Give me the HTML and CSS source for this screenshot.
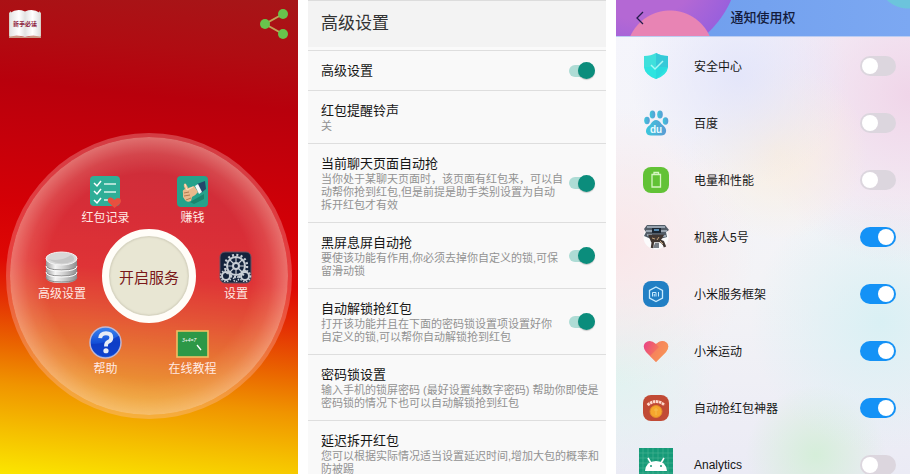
FILE: index.html
```
<!DOCTYPE html>
<html lang="zh-CN">
<head>
<meta charset="utf-8">
<title>抢红包助手</title>
<link rel="stylesheet" href="styles.css">
</head>
<body>
<main class="screens">

<section class="screen home">
  <header class="home-bar">
    <button class="plain" aria-label="新手必读">
      <svg width="34" height="30" viewBox="0 0 34 30">
        <defs><linearGradient id="page" x1="0" x2="1" y1="0" y2="0"><stop offset="0" stop-color="#e4e4e4"/><stop offset=".3" stop-color="#fff"/><stop offset=".5" stop-color="#e2e2e2"/><stop offset=".75" stop-color="#fff"/><stop offset="1" stop-color="#e0e0e0"/></linearGradient></defs>
        <path d="M1 4 3 2v26H1zM31 2l2 2v24h-2z" fill="#d9d0c8"/>
        <path d="M1 27Q9 26 17 28Q25 26 33 27V29H1Z" fill="#c99a86"/>
        <path d="M2 4Q9-1 17 2.500Q25-1 32 4V27.500Q24 26 17 28Q10 26 2 27.500Z" fill="url(#page)"/>
        <text x="17" y="17" class="book-text">新手必读</text>
      </svg>
    </button>
    <button class="plain" aria-label="分享">
      <svg width="28" height="32" viewBox="0 0 28 32">
        <path d="M23 6 5 16l18 10" fill="none" stroke="#c0a458" stroke-width="2"/>
        <g fill="#68c34c"><circle cx="23" cy="6" r="5"/><circle cx="5" cy="16" r="5"/><circle cx="23" cy="26" r="5"/></g>
      </svg>
    </button>
  </header>
  <nav class="wheel">
    <div class="wheel-row spread">
      <button class="tile">
        <svg width="33" height="33" viewBox="0 0 33 33">
          <rect x="1" y="1" width="30" height="30" rx="4" fill="#2fae97"/>
          <path d="m5 8 3 3 4-5M5 16l3 3 4-5M5 25l3 3 4-5" fill="none" stroke="#fff" stroke-width="1.500"/>
          <path d="M15 9h12M15 17h12M15 25h4" stroke="#d7f2ea" stroke-width="1.500"/>
          <path d="M25.500 33 19 27Q18 22 22 22.500Q24 23 25.500 25Q28 22 31 23.500Q33 26 31 28.500Z" fill="#e8503f"/>
        </svg>
        <span>红包记录</span>
      </button>
      <button class="tile">
        <svg width="33" height="33" viewBox="0 0 33 33">
          <rect x="1" y="1" width="31" height="31" rx="4" fill="#25a28b"/>
          <path d="M14 27 28 19V24L18 29Z" fill="#167863" opacity=".7"/>
          <path d="m21 9 8-3 1 8-5 4z" fill="#24476b"/>
          <path d="m19 11 3-2 4 8-3 2z" fill="#f4f8fa"/>
          <path d="M8 9Q10 7 12 13L18 11 22 17Q20 20 16 22L15 26Q11 28 9 25L7 22 7 18Q6 15 9 14Q7 11 8 9Z" fill="#eab98c"/>
          <path d="m8 18 5-1M8 21l6-1M10 25l5-2" stroke="#b37b50" stroke-width="1"/>
          <path d="m9 9 2 6 6-3" stroke="#ffe0bc" fill="none"/>
        </svg>
        <span>赚钱</span>
      </button>
    </div>
    <div class="wheel-row">
      <button class="tile">
        <svg width="33" height="33" viewBox="0 0 33 33">
          <defs><linearGradient id="metal"><stop offset="0" stop-color="#9b9b9b"/><stop offset=".3" stop-color="#f5f5f5"/><stop offset=".6" stop-color="#cdcdcd"/><stop offset="1" stop-color="#8d8d8d"/></linearGradient></defs>
          <path d="M1 7v19q0 6 15.500 6T32 26V7z" fill="url(#metal)"/>
          <path d="M1 14q0 5 15.500 5T32 14M1 20q0 5 15.500 5T32 20M1 26q0 5 15.500 5T32 26" fill="none" stroke="#888" stroke-width="1"/>
          <path d="M1 15q0 5 15.500 5T32 15M1 21q0 5 15.500 5T32 21" fill="none" stroke="#fff" stroke-width="1"/>
          <ellipse cx="16.500" cy="7.500" rx="15.500" ry="6.500" fill="#d8d8d8" stroke="#f4f4f4"/>
          <path d="M3 8q13 3 23-4 5 3 2 6-12 6-25-2z" fill="#c6c6c6"/>
        </svg>
        <span>高级设置</span>
      </button>
      <button class="start">开启服务</button>
      <button class="tile">
        <svg width="33" height="33" viewBox="0 0 33 33">
          <rect x="1" y="1" width="31" height="31" rx="5" fill="#14233c" stroke="#6d5362"/>
          <g fill="none" stroke="#c9cfd6">
            <circle cx="17" cy="15" r="9" stroke-width="2"/>
            <circle cx="17" cy="15" r="11" stroke-width="2.500" stroke-dasharray="2 2.320"/>
            <circle cx="17" cy="15" r="3" stroke-width="2"/>
            <path d="M17 6v6M17 18v6M8 15h6M20 15h6M11 9l4 4M23 9l-4 4M11 21l4-4M23 21l-4-4" stroke-width="1.200"/>
            <circle cx="7" cy="25" r="4" stroke-width="2"/><circle cx="7" cy="25" r="5.500" stroke-width="1.500" stroke-dasharray="1.500 1.500"/>
            <circle cx="26" cy="25" r="4" stroke-width="2"/><circle cx="26" cy="25" r="5.500" stroke-width="1.500" stroke-dasharray="1.500 1.500"/>
            <circle cx="17" cy="28" r="2.500" stroke-width="1.500" stroke-dasharray="1.500 1"/>
          </g>
        </svg>
        <span>设置</span>
      </button>
    </div>
    <div class="wheel-row spread">
      <button class="tile">
        <svg width="33" height="33" viewBox="0 0 34 34">
          <defs><linearGradient id="help" x1="0" y1="0" x2="0" y2="1"><stop offset="0" stop-color="#3c86f0"/><stop offset=".5" stop-color="#1450d8"/><stop offset="1" stop-color="#1c62ea"/></linearGradient></defs>
          <circle cx="17" cy="17" r="16" fill="url(#help)" stroke="#c3b6cf" stroke-width="1.500"/>
          <path d="M2 18Q14 20 31 10Q34 20 28 27Q17 36 6 27Q2 23 2 18Z" fill="#0b32bd" opacity=".65"/>
          <path d="M11.500 12.500Q12 7.500 17.500 7.500Q23 7.500 23 12Q23 15 19.500 16.500Q17.500 17.500 17.500 21" fill="none" stroke="#e8edf6" stroke-width="4"/>
          <circle cx="17.500" cy="25.500" r="2.700" fill="#e8edf6"/>
        </svg>
        <span>帮助</span>
      </button>
      <button class="tile">
        <svg width="33" height="33" viewBox="0 0 33 33">
          <rect x="1" y="5" width="31" height="26" fill="#2d9847" stroke="#f1bf63" stroke-width="1.600"/>
          <text x="6" y="16" class="board-text">3+4=7</text>
          <path d="m21 19 4 5" stroke="#fff" stroke-width="1.300"/>
        </svg>
        <span>在线教程</span>
      </button>
    </div>
  </nav>
</section>

<section class="screen prefs">
  <h1 class="prefs-title">高级设置</h1>
  <ul class="prefs-list">
    <li class="pref"><div class="pref-text"><label class="pref-name" for="p1">高级设置</label></div><input class="md-switch" type="checkbox" id="p1" checked></li>
    <li class="pref"><div class="pref-text"><h2 class="pref-name">红包提醒铃声</h2><p>关</p></div></li>
    <li class="pref"><div class="pref-text"><label class="pref-name" for="p2">当前聊天页面自动抢</label><p>当你处于某聊天页面时，该页面有红包来，可以自<br>动帮你抢到红包,但是前提是助手类别设置为自动<br>拆开红包才有效</p></div><input class="md-switch" type="checkbox" id="p2" checked></li>
    <li class="pref"><div class="pref-text"><label class="pref-name" for="p3">黑屏息屏自动抢</label><p>要使该功能有作用,你必须去掉你自定义的锁,可保<br>留滑动锁</p></div><input class="md-switch" type="checkbox" id="p3" checked></li>
    <li class="pref"><div class="pref-text"><label class="pref-name" for="p4">自动解锁抢红包</label><p>打开该功能并且在下面的密码锁设置项设置好你<br>自定义的锁,可以帮你自动解锁抢到红包</p></div><input class="md-switch" type="checkbox" id="p4" checked></li>
    <li class="pref"><div class="pref-text"><h2 class="pref-name">密码锁设置</h2><p>输入手机的锁屏密码 (最好设置纯数字密码) 帮助你即使是<br>密码锁的情况下也可以自动解锁抢到红包</p></div></li>
    <li class="pref"><div class="pref-text"><h2 class="pref-name">延迟拆开红包</h2><p>您可以根据实际情况适当设置延迟时间,增加大包的概率和<br>防被踢</p></div></li>
  </ul>
</section>

<section class="screen access">
  <header class="access-bar">
    <button class="plain back" aria-label="返回"><svg width="10" height="14" viewBox="0 0 10 14"><path d="M8 1 2 7l6 6" fill="none" stroke="#241c4c" stroke-width="1.300"/></svg></button>
    <h1>通知使用权</h1>
  </header>
  <ul class="app-list">
    <li class="app">
      <svg class="app-icon" viewBox="0 0 26 26"><path d="M13 0Q18 3 25 3V14Q24 22 13 26Q2 22 1 14V3Q8 3 13 0Z" fill="#3fe0dc"/><path d="M13 0Q18 3 25 3V14L13 26Z" fill="#35c9d8"/><path d="M1 14h24Q24 22 13 26Q2 22 1 14Z" fill="#22e6e2" opacity=".6"/><path d="m8 12 4 4 8-8" fill="none" stroke="#a8f8f4" stroke-width="1.500"/></svg>
      <label for="a1">安全中心</label><input class="mi-switch" type="checkbox" id="a1">
    </li>
    <li class="app">
      <svg class="app-icon" viewBox="0 0 26 26"><defs><linearGradient id="paw"><stop offset="0" stop-color="#3cc8dc"/><stop offset="1" stop-color="#5b9bd4"/></linearGradient></defs><g fill="url(#paw)"><ellipse cx="4" cy="10.500" rx="2.800" ry="3.700"/><ellipse cx="9.500" cy="4.500" rx="2.800" ry="4"/><ellipse cx="17" cy="4.500" rx="2.800" ry="4"/><ellipse cx="22.500" cy="11" rx="2.800" ry="3.700"/><path d="M13 10Q16 10 18.500 14Q24 18 23 22Q22 26 17 25.500H9Q4 26 3 22Q2.500 18 7 15Q10 10 13 10Z"/></g><text x="13" y="23" class="du-text">du</text></svg>
      <label for="a2">百度</label><input class="mi-switch" type="checkbox" id="a2">
    </li>
    <li class="app">
      <svg class="app-icon" viewBox="0 0 26 26"><rect width="26" height="26" rx="8" fill="#62c236"/><path d="M9 7.500h8.500V20H9zM11 7V5.500h4.500V7" fill="none" stroke="#d6f5c2" stroke-width="1.300"/></svg>
      <label for="a3">电量和性能</label><input class="mi-switch" type="checkbox" id="a3">
    </li>
    <li class="app">
      <svg class="app-icon" viewBox="0 0 26 26"><circle cx="13" cy="13" r="12.500" fill="#fbfbfc"/><path d="M1 5 4 1h18l4 5-3 2 1 5-7 2H8L1 12l2-4z" fill="#535d68"/><path d="M4 3h18M3 7h6M18 7h6M4 11h5M18 12h5" stroke="#aebbc6" stroke-width="1.300"/><rect x="9" y="4" width="9" height="5" fill="#1c2733"/><path d="M11 6h5" stroke="#68aada" stroke-width="1.500"/><path d="M7 12h12l-3 5H9zM10 17l-1 7M15 16l5 2 2 5" fill="#493d37" stroke="#413732" stroke-width="2.500"/><path d="M10 24h6v-5h-4z" fill="#777e86"/><path d="m9 14 3 1M16 13l-2 3M17 17l3 3" stroke="#c1a178"/></svg>
      <label for="a4">机器人5号</label><input class="mi-switch" type="checkbox" id="a4" checked>
    </li>
    <li class="app">
      <svg class="app-icon" viewBox="0 0 26 26"><rect width="26" height="26" rx="8" fill="#217fc4"/><path d="m13 6 6.500 3.500v7.500L13 20.500 6.500 17V9.500z" fill="none" stroke="#c9ecff" stroke-width="1.300"/><path d="M9.500 15.500v-4h3.500v4M11.250 13v2.500M15.500 11v4.500" fill="none" stroke="#c9ecff"/></svg>
      <label for="a5">小米服务框架</label><input class="mi-switch" type="checkbox" id="a5" checked>
    </li>
    <li class="app">
      <svg class="app-icon" viewBox="0 0 26 26"><defs><linearGradient id="heart" x1="0" x2="1" y1="0" y2=".4"><stop offset="0" stop-color="#e8408a"/><stop offset=".5" stop-color="#f26a64"/><stop offset="1" stop-color="#f79454"/></linearGradient></defs><path d="M13 24 3 14Q-1 9 2 5Q7 .500 13 6Q19 .500 24 5Q27 9 23 14Z" fill="url(#heart)"/><path d="M13 6Q19 .500 24 5Q27 9 23 14L13 24 7 18 16 9Z" fill="#f99258" opacity=".6"/></svg>
      <label for="a6">小米运动</label><input class="mi-switch" type="checkbox" id="a6" checked>
    </li>
    <li class="app">
      <svg class="app-icon" viewBox="0 0 26 26"><rect width="26" height="26" rx="8" fill="#c14a35"/><path d="M4.500 10Q13 3 21.500 10" fill="none" stroke="#ffd9cc" stroke-width="2.800" stroke-dasharray="2.500 .6"/><circle cx="13" cy="16.500" r="6" fill="#f6a72d" stroke="#e38b2a"/><path d="M13 13v7M11 15h4" stroke="#f8bd4c"/></svg>
      <label for="a7">自动抢红包神器</label><input class="mi-switch" type="checkbox" id="a7" checked>
    </li>
    <li class="app">
      <svg class="app-icon large" viewBox="0 0 34 34"><rect width="34" height="34" fill="#169a78"/><path d="M4 0v34M9 0v34M14 0v34M19 0v34M24 0v34M29 0v34M0 5h34M0 10h34M0 15h34M0 20h34M0 25h34M0 30h34" stroke="#4ab796" stroke-width=".6"/><path d="m9 10 3 5M25 10l-3 5" stroke="#fff" stroke-width="1.500"/><path d="M6 23Q7 13 17 13T28 23Z" fill="#fff"/><circle cx="12" cy="18" r="1" fill="#169a78"/><circle cx="22" cy="18" r="1" fill="#169a78"/></svg>
      <label for="a8">Analytics</label><input class="mi-switch" type="checkbox" id="a8">
    </li>
  </ul>
</section>

</main>
</body>
</html>
```
FILE: styles.css
```
* { box-sizing: border-box; }

body {
  margin: 0;
  background: #fff;
  color: #161616;
  font-family: "Liberation Sans", "Noto Sans CJK SC", sans-serif;
}

h1, h2, p, ul { margin: 0; padding: 0; }
ul { list-style: none; }
button { font: inherit; cursor: pointer; }
svg { display: block; }

.screens {
  display: grid;
  grid-template-columns: 298fr 298fr 294fr;
  gap: 10px;
  height: 100vh;
}

.screen { min-width: 0; overflow: hidden; }

.plain {
  padding: 0;
  border: 0;
  background: none;
}

/* Home */
.home {
  background: linear-gradient(186deg, #a61618 0%, #b00c12 12%, #b8000c 22%, #c6000a 34%, #d40006 46%, #de0804 57%, #e43004 65%, #ea6400 74%, #f09400 82%, #f5be00 91%, #fbe600 100%);
}

.home-bar {
  display: flex;
  justify-content: space-between;
  align-items: center;
  padding: 8px 10px 0 8px;
}

.book-text {
  font-size: 6px;
  font-weight: 700;
  fill: #8c2340;
  text-anchor: middle;
}

.board-text { font-size: 5px; font-style: italic; fill: #fff; }

.wheel {
  display: flex;
  flex-direction: column;
  justify-content: center;
  gap: 3px;
  width: 96%;
  aspect-ratio: 1;
  margin: 93px auto 0;
  border: 4px solid rgba(255, 200, 200, .3);
  border-radius: 50%;
  background: radial-gradient(circle closest-side, rgba(226, 190, 214, .24) 0%, rgba(226, 190, 214, .24) 74%, rgba(240, 205, 205, .34) 88%, rgba(250, 215, 205, .52) 100%) padding-box;
}

.wheel-row {
  display: flex;
  justify-content: center;
  align-items: center;
  gap: 4px;
}

.spread { gap: 15px; }

.tile {
  display: flex;
  flex-direction: column;
  align-items: center;
  gap: 2px;
  width: 72px;
  padding: 0;
  border: 0;
  background: none;
  color: #ffe9e4;
  font-size: 12px;
  line-height: 16px;
}

.start {
  width: 94px;
  height: 94px;
  padding: 0;
  border: 7px solid #fffdf8;
  border-radius: 50%;
  background: #e8e6d3;
  box-shadow: inset 0 0 0 1px #d9d6c4, inset 0 0 2px 1px #cfccb8;
  color: #7a1719;
  font-size: 15px;
}

/* Advanced settings */
.prefs { background: #f9f9f9; }

.prefs-title {
  padding: 11px 13px 14px;
  border-top: 1px solid #dcdcdc;
  border-bottom: 1px solid #dedede;
  background: linear-gradient(#f3f3f3 46px, #fafafa 46px);
  color: #333;
  font-size: 17px;
  font-weight: 400;
  line-height: 24px;
}

.pref {
  display: flex;
  align-items: center;
  justify-content: space-between;
  padding: 10px 11px 10px 13px;
  border-bottom: 1px solid #dedede;
}

.pref-name {
  display: block;
  font-size: 13px;
  font-weight: 400;
  line-height: 19px;
}

.pref p {
  color: #929292;
  font-size: 11px;
  line-height: 13px;
  white-space: nowrap;
}

.md-switch {
  appearance: none;
  display: flex;
  flex: none;
  align-items: center;
  justify-content: flex-end;
  width: 26px;
  height: 12px;
  margin: 0;
  border-radius: 6px;
  background: #aedcd5;
}

.md-switch::before {
  content: "";
  flex: none;
  width: 17px;
  height: 17px;
  border-radius: 50%;
  background: #0b8d7c;
  box-shadow: 0 1px 1px rgba(0, 0, 0, .2);
}

/* Notification access */
.access {
  background:
    radial-gradient(circle at 42% 16%, rgba(226, 228, 250, .9), rgba(226, 228, 250, 0) 110px),
    radial-gradient(circle at 55% 32%, rgba(250, 238, 222, .9), rgba(250, 238, 222, 0) 90px),
    radial-gradient(circle at 100% 20%, rgba(240, 212, 232, .95), rgba(240, 212, 232, 0) 170px),
    radial-gradient(circle at 0% 52%, rgba(250, 230, 232, .95), rgba(250, 230, 232, 0) 140px),
    radial-gradient(circle at 90% 68%, rgba(216, 240, 244, .95), rgba(216, 240, 244, 0) 130px),
    radial-gradient(circle at 68% 96%, rgba(212, 238, 216, .95), rgba(212, 238, 216, 0) 70px),
    radial-gradient(circle at 0% 79%, rgba(224, 243, 240, .95), rgba(224, 243, 240, 0) 100px),
    linear-gradient(#f5f5fc, #f3f3f6 60%, #ebebf5);
}

.access-bar {
  display: grid;
  grid-template-columns: 48px 1fr 48px;
  align-items: center;
  height: 37px;
  border-bottom: 1px solid #bccdf2;
  background:
    radial-gradient(circle at 54px 54px, #e884b4 43px, transparent 44px),
    radial-gradient(circle at 24px -40px, #b468d4 60px, #9a60dc 99px, transparent 100px),
    radial-gradient(circle at calc(100% - 2px) -22px, #6cc4dc 30px, transparent 31px),
    linear-gradient(90deg, #6c9cec, #7ca8f2);
}

.access-bar h1 {
  color: #131b3c;
  font-size: 13px;
  font-weight: 500;
  line-height: 20px;
  text-align: center;
}

.back { padding-left: 19px; }

.app {
  display: grid;
  grid-template-columns: 34px 1fr 36px;
  align-items: center;
  gap: 21px;
  height: 57px;
  padding: 0 14px 0 23px;
  font-size: 12px;
}

.app-icon { width: 26px; height: 26px; justify-self: center; }
.app-icon.large { width: 34px; height: 34px; }

.du-text {
  font-size: 10px;
  font-weight: 700;
  fill: #e8fbff;
  text-anchor: middle;
}

.mi-switch {
  appearance: none;
  display: flex;
  align-items: center;
  width: 36px;
  height: 20px;
  margin: 0;
  padding: 0 2px;
  border-radius: 10px;
  background: #dcd6de;
}

.mi-switch::before {
  content: "";
  width: 16px;
  height: 16px;
  border-radius: 50%;
  background: #fff;
}

.mi-switch:checked {
  justify-content: flex-end;
  background: #1492f6;
}
```
